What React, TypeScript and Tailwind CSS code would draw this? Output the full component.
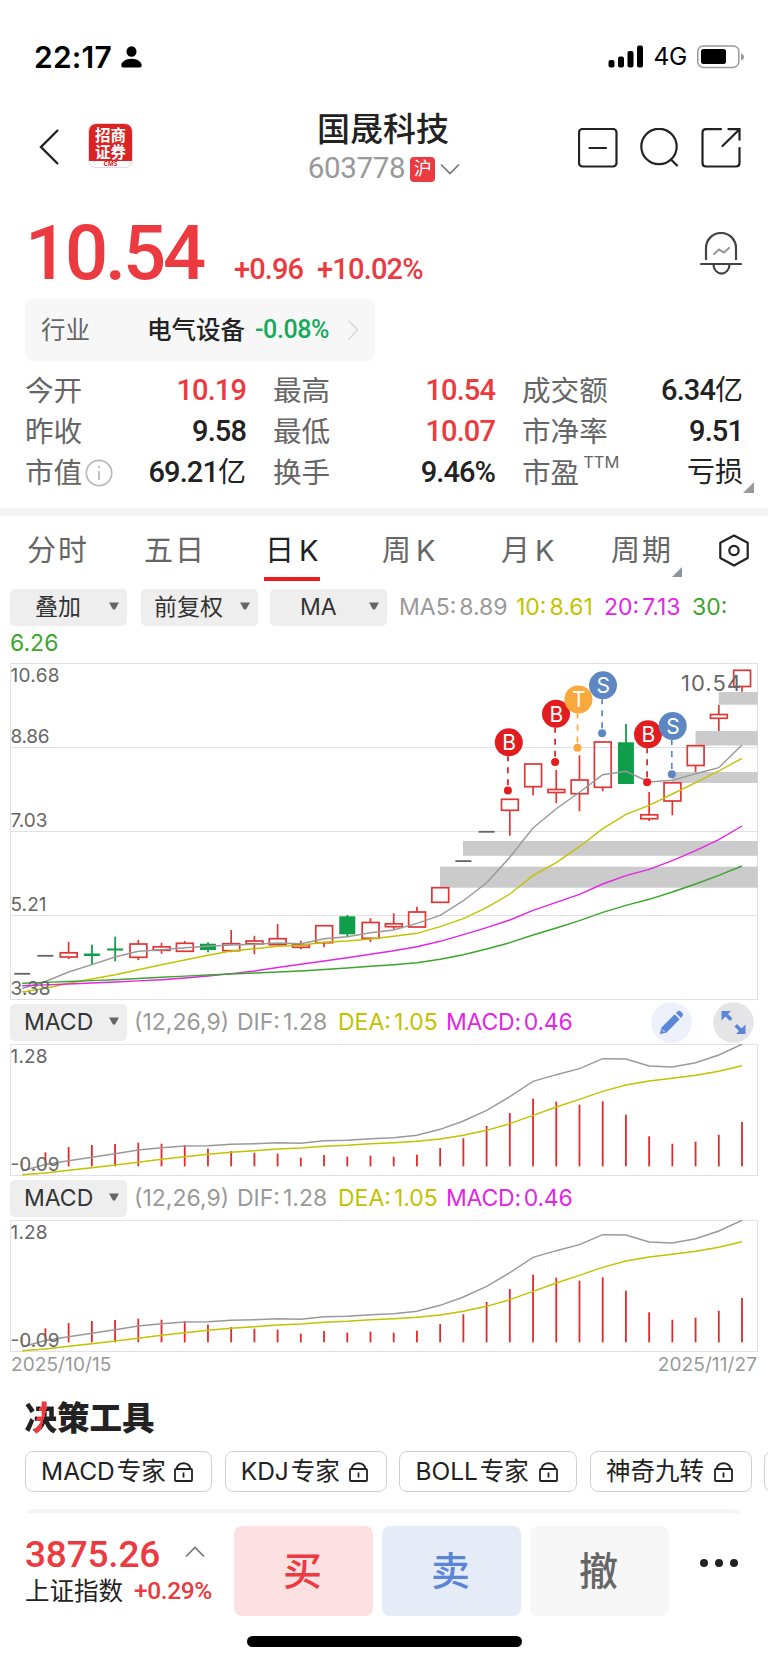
import React from 'react';

const UP = '#e03535';
const DOWN = '#0f9f4a';
const GRAY = '#999999';
const YELLOW = '#c3c200';
const MAGENTA = '#e326e6';
const GREEN = '#3ba52c';

const num = "font-['Roboto','Noto_Sans_CJK_SC',sans-serif] font-medium";

// x position of the n-th trading day
const dayX = (i: number) => 22.2 + i * 23.22;

type Candle = { type: 'up' | 'down' | 'flat'; top: number; bottom: number; high?: number; low?: number };

const candles: Candle[] = [
  { type: 'flat', top: 973.7, bottom: 973.7 },
  { type: 'flat', top: 955.7, bottom: 955.7 },
  { type: 'up', top: 952.8, bottom: 957, high: 941.7, low: 959 },
  { type: 'down', top: 953.5, bottom: 956, high: 944.7, low: 965 },
  { type: 'down', top: 948.5, bottom: 950.5, high: 936.7, low: 961.3 },
  { type: 'up', top: 944, bottom: 957.3, high: 940, low: 960 },
  { type: 'up', top: 946.8, bottom: 950.3, high: 942.7, low: 953.7 },
  { type: 'up', top: 943.3, bottom: 951.3, high: 941, low: 952 },
  { type: 'down', top: 943.7, bottom: 950, high: 942.3, low: 952.3 },
  { type: 'up', top: 943.7, bottom: 950.7, high: 930, low: 952.3 },
  { type: 'up', top: 941, bottom: 943.8, high: 935.7, low: 954.3 },
  { type: 'up', top: 938.7, bottom: 944.7, high: 924 },
  { type: 'up', top: 944.7, bottom: 947.3, high: 940.7, low: 949.3 },
  { type: 'up', top: 925.7, bottom: 942.7, low: 947.3 },
  { type: 'down', top: 916.3, bottom: 934.3, high: 915, low: 936.3 },
  { type: 'up', top: 922.5, bottom: 938.3, high: 918.3, low: 942 },
  { type: 'up', top: 923.8, bottom: 926.7, high: 913.3, low: 929.3 },
  { type: 'up', top: 912, bottom: 927, high: 906.7 },
  { type: 'up', top: 887.7, bottom: 902.3 },
  { type: 'flat', top: 861, bottom: 861 },
  { type: 'flat', top: 831.7, bottom: 831.7 },
  { type: 'up', top: 799.3, bottom: 810.3, low: 835.7 },
  { type: 'up', top: 764, bottom: 786.7, low: 795.3 },
  { type: 'up', top: 789.5, bottom: 792.5, high: 770, low: 803.3 },
  { type: 'up', top: 780, bottom: 793.7, high: 755.3, low: 811.3 },
  { type: 'up', top: 742, bottom: 787.3, low: 791.3 },
  { type: 'down', top: 742.3, bottom: 784, high: 724 },
  { type: 'up', top: 814.8, bottom: 818.7, high: 792, low: 821 },
  { type: 'up', top: 782.8, bottom: 801, low: 815.3 },
  { type: 'up', top: 745.7, bottom: 765.5, low: 772 },
  { type: 'up', top: 714.5, bottom: 718.3, high: 705, low: 731 },
  { type: 'up', top: 670.3, bottom: 686.5, low: 691.7 },
];

const ma5 = [
  988.5, 981.5, 972, 964.7, 957, 951.3, 949.7, 947.7, 946.3, 945, 944.3, 943, 943.7, 938.7, 936.7, 932.7,
  930, 923.3, 915.3, 900.7, 882.7, 857.3, 828, 808.7, 792.3, 774.7, 771.3, 782, 780.3, 773.7, 767.7, 745,
];
const ma10 = [
  992, 988.3, 983.3, 979, 974.7, 969.7, 964.7, 960, 955.3, 951, 948.7, 946.3, 945.3, 942.3, 941, 939,
  936.3, 933.3, 926.7, 918.7, 907.7, 894, 875.7, 862.7, 846.7, 828.7, 814.3, 805.3, 794, 782.7, 771, 758.3,
];
const ma20 = [
  985.7, 984.9, 984, 983, 982, 980.9, 979.7, 978, 976, 973.6, 971, 967.5, 964.3, 961, 957.7, 954.3,
  950.7, 946.7, 941.3, 934.7, 927.7, 920, 910.3, 902.3, 894.3, 884, 875.7, 869.3, 860.7, 850.7, 839.7, 826,
];
const ma30 = [
  983.3, 982.4, 981.5, 980.6, 979.7, 978.5, 977.3, 976.1, 975, 974, 973, 972, 971, 969.5, 968, 966.3,
  964.7, 962.7, 959.3, 954.7, 949, 942.7, 935, 928, 920.7, 912.3, 905.3, 899.3, 892, 884, 875.3, 866,
];
const dif = [
  1170.7, 1164.5, 1160.7, 1157.3, 1153.7, 1150, 1147.7, 1146, 1145.7, 1144.3, 1143.7, 1142.7, 1143.3, 1140.7, 1140.3, 1138.7,
  1137.7, 1135.3, 1129.3, 1121, 1110.3, 1096.7, 1081.3, 1074.7, 1068.7, 1058.7, 1059, 1066, 1067, 1062.7, 1055, 1044.3,
];
const dea = [
  1174.7, 1173, 1170.3, 1167.7, 1165, 1162.3, 1159.3, 1156.7, 1154.3, 1152.3, 1150.7, 1149, 1148, 1146.3, 1145.3, 1143.7,
  1142.7, 1141.3, 1139, 1135.3, 1130.3, 1123.7, 1115.3, 1107, 1099.3, 1091.3, 1085, 1081, 1078.3, 1075.3, 1071.3, 1065.7,
];
const bars = [
  1161, 1152.3, 1147, 1145, 1144, 1142.7, 1143.7, 1145, 1148.7, 1151, 1152.7, 1153.7, 1157.7, 1155, 1156.7, 1155.7,
  1156.7, 1154.7, 1148, 1138.3, 1126, 1113, 1098.7, 1101.7, 1104.7, 1101.3, 1114.7, 1136.3, 1143.7, 1141.7, 1134.7, 1122,
];

const gaps = [
  [440, 866.7, 887.7],
  [463, 841, 855.8],
  [672, 772, 783],
  [695.5, 731, 745.5],
  [718.7, 692, 704.7],
];

const marks = [
  { label: 'B', color: '#e21d20', x: 508.8, y: 742.3, dot: 790.5 },
  { label: 'B', color: '#e21d20', x: 556, y: 713.8, dot: 762 },
  { label: 'T', color: '#f9a93c', x: 578.4, y: 699.5, dot: 747.7 },
  { label: 'S', color: '#5d87c2', x: 603, y: 685.3, dot: 733.3 },
  { label: 'B', color: '#e21d20', x: 648, y: 734.3, dot: 782.3 },
  { label: 'S', color: '#5d87c2', x: 672.7, y: 726, dot: 774.3 },
];

const yLabels: [string, number, number][] = [
  ['10.68', 682.3, 49],
  ['8.86', 743.3, 39],
  ['7.03', 827.3, 37],
  ['5.21', 911.3, 36],
  ['3.38', 995, 40],
];

const Line = ({ data, color }: { data: number[]; color: string }) => (
  <polyline
    points={data.map((y, i) => `${dayX(i)},${y}`).join(' ')}
    fill="none"
    stroke={color}
    strokeWidth="1.4"
  />
);

const CandleShape = ({ candle, x }: { candle: Candle; x: number }) => {
  const { type, top, bottom, high = top, low = bottom } = candle;
  if (type === 'flat') {
    return <rect x={x - 8} y={top - 0.8} width="16" height="1.8" fill="#666" />;
  }
  if (type === 'down') {
    return (
      <g fill={DOWN}>
        <rect x={x - 0.8} y={high} width="1.8" height={low - high} />
        <rect x={x - 8} y={top} width="16" height={bottom - top} />
      </g>
    );
  }
  return (
    <g stroke={UP} strokeWidth="1.7" fill="none">
      <path d={`M${x} ${high}V${top}M${x} ${bottom}V${low}`} />
      <rect x={x - 8.3} y={top} width="16.8" height={bottom - top} />
    </g>
  );
};

const KChart = () => (
  <svg className="block w-full h-[337px]" viewBox="0 663 768 337">
    <rect x="10.5" y="663.5" width="747" height="336" fill="none" stroke="#e2e2e2" />
    {[747.5, 831.5, 915.5].map((y) => (
      <line key={y} x1="10.5" x2="757.5" y1={y} y2={y} stroke="#e2e2e2" />
    ))}
    {gaps.map(([x, y1, y2]) => (
      <rect key={x} x={x} y={y1} width={757.8 - x} height={y2 - y1} fill="#cbcbcb" />
    ))}
    {candles.map((candle, i) => (
      <CandleShape key={i} candle={candle} x={dayX(i)} />
    ))}
    <Line data={ma5} color={GRAY} />
    <Line data={ma10} color={YELLOW} />
    <Line data={ma20} color={MAGENTA} />
    <Line data={ma30} color={GREEN} />
    {yLabels.map(([label, y, w]) => (
      <text key={label} x="10.5" y={y} textLength={w} fontSize="19" fill="#666">
        {label}
      </text>
    ))}
    <text x="681" y="691" textLength="60" fontSize="22" fill="#666">
      10.54
    </text>
    {marks.map((m) => (
      <g key={m.x}>
        <line x1={m.x - 0.9} x2={m.x - 0.9} y1={m.y + 14} y2={m.dot} stroke={m.color} strokeWidth="1.7" strokeDasharray="6 6" strokeDashoffset="1" />
        <circle cx={m.x - 0.9} cy={m.dot} r="4" fill={m.color} />
        <circle cx={m.x} cy={m.y} r="14" fill={m.color} />
        <text x={m.x + 0.3} y={m.y + 7.8} textAnchor="middle" fontSize="21" fill="#fff">
          {m.label}
        </text>
      </g>
    ))}
  </svg>
);

const MacdChart = () => (
  <svg className="block w-full h-[132px]" viewBox="0 1044 768 132">
    <rect x="10.5" y="1044.5" width="747" height="131" fill="none" stroke="#e2e2e2" />
    {bars.map((y, i) => (
      <rect key={i} x={dayX(i) - 0.9} y={y} width="1.8" height={1166.3 - y} fill="#e22a2d" opacity={i === 0 ? 0.5 : 1} />
    ))}
    <Line data={dif} color={GRAY} />
    <Line data={dea} color={YELLOW} />
    <text x="10.5" y="1063" textLength="37" fontSize="19" fill="#666">1.28</text>
    <text x="10.5" y="1171.3" textLength="49" fontSize="19" fill="#666">-0.09</text>
  </svg>
);

const Select = ({ label, pad }: { label: string; pad: string }) => (
  <div className={`flex h-[37px] w-[117px] shrink-0 items-center justify-between rounded-[5px] bg-[#eeeeee] pr-[8px] ${pad}`}>
    <span className="whitespace-nowrap text-[23px] leading-none text-[#333]">{label}</span>
    <svg width="10" height="8" viewBox="0 0 10 8" className="mb-[3px] shrink-0">
      <path d="M0 .5h10L6 7.5H4z" fill="#666" />
    </svg>
  </div>
);

const MacdHeader = ({ tools }: { tools?: boolean }) => (
  <div className="flex h-[44px] items-center pl-[10px] pr-[14px]">
    <Select label="MACD" pad="pl-[14px]" />
    <div className="ml-[7px] flex text-[23px] leading-none whitespace-pre [word-spacing:-3.5px]">
      <span className="w-[103px] tracking-[0px] text-[#999]">(12,26,9)</span>
      <span className="w-[101px] tracking-[0px] text-[#999]">DIF: 1.28</span>
      <span className="w-[108px] tracking-[0px] text-[#c3c200]">DEA: 1.05</span>
      <span className="tracking-[-0.2px] text-[#e326e6]">MACD: 0.46</span>
    </div>
    {tools && (
      <div className="ml-auto flex gap-[21px]">
        <svg width="41" height="41" viewBox="0 0 41 41">
          <circle cx="20.5" cy="20.5" r="20.3" fill="#ecf1fb" />
          <path d="M10.5 25.5 23.7 12.3l5 5L15.5 30.5l-6.6 1.8z" fill="#5b86d8" />
          <path d="m25 11 1.7-1.7q1.4-1 2.8 0l2 2q1 1.4 0 2.8L30 16z" fill="#5b86d8" />
          <path d="m11 27.5 2.500 2.500" stroke="#ecf1fb" strokeWidth="1" />
        </svg>
        <svg width="41" height="41" viewBox="0 0 41 41">
          <circle cx="20.5" cy="20.5" r="20.3" fill="#e5e5e7" />
          <path d="M8.500 9h9.500l-3 3 4.500 4.500-2.500 2.500-4.500-4.500-4 4zM32.500 32H23l3-3-4.500-4.500L24 22l4.500 4.500 4-4z" fill="#5b86d8" />
        </svg>
      </div>
    )}
  </div>
);

const StatusBar = () => (
  <div className="flex h-[100px] items-start justify-between pl-[34px] pr-[23px] pt-[42px]">
    <div className="flex h-[29px] items-center">
      <span className="text-[30px] font-semibold leading-none tracking-[0.2px] text-black">22:17</span>
      <svg width="21" height="22" viewBox="0 0 21 22" className="ml-[9px]">
        <ellipse cx="10.5" cy="5.5" rx="5" ry="5.3" />
        <path d="M.3 19.5C.3 15.5 5 12.7 10.5 12.7s10.200 2.800 10.200 6.800c0 1.300-.8 1.900-2 1.900H2.300c-1.200 0-2-.6-2-1.900z" />
      </svg>
    </div>
    <div className="flex h-[29px] items-center">
      <svg width="36" height="23" viewBox="0 0 36 23">
        <rect x="0.5" y="15" width="6" height="7.5" rx="2" />
        <rect x="10" y="11.5" width="6" height="11" rx="2" />
        <rect x="19.5" y="6" width="6" height="16.5" rx="2" />
        <rect x="29" y="0.5" width="6" height="22" rx="2" />
      </svg>
      <span className="ml-[9px] text-[24.5px] leading-none tracking-[-0.3px] text-black">4G</span>
      <svg width="48" height="24" viewBox="0 0 48 24" className="ml-[10px]">
        <rect x="0.8" y="0.9" width="41" height="21.5" rx="5.5" fill="none" stroke="#999" strokeWidth="1.5" />
        <rect x="4" y="4" width="25" height="15" rx="2.5" />
        <path d="M44 8.5q3 1 3 3.500t-3 3.500z" fill="#999" />
      </svg>
    </div>
  </div>
);

const NavBar = () => (
  <div className="grid h-[95px] grid-cols-[1fr_auto_1fr] items-start px-[39px]">
    <div className="flex items-center gap-[29px] pt-[23px]">
      <svg width="20" height="36" viewBox="0 0 20 36" className="mt-[2px]">
        <path d="M19 1 2 18l17 17" fill="none" stroke="#222" strokeWidth="2.4" />
      </svg>
      <div className="flex h-[45px] w-[45px] flex-col items-center overflow-hidden rounded-[8px] border border-[#e8dada] bg-white font-['Noto_Sans_CJK_SC',sans-serif]">
        <div className="flex h-[37px] w-[45px] shrink-0 flex-col items-center bg-[#dc2222] pt-[2px] text-[15.5px] font-bold leading-[16.5px] text-white">
          <span>招商</span>
          <span>证券</span>
        </div>
        <span className="font-['Open_Sans',sans-serif] text-[6.5px] font-bold leading-[6px] text-[#dc2222]">CMS</span>
      </div>
    </div>
    <div className="flex flex-col items-center">
      <h1 className="-ml-[2px] pt-[12px] text-[33px] font-medium leading-[34px] text-[#222]">国晟科技</h1>
      <div className="mt-[7px] flex h-[32px] items-center">
        <span className="font-['Roboto',sans-serif] text-[29.5px] leading-none tracking-[-0.3px] text-[#999]">603778</span>
        <span className="ml-[5px] flex h-[25px] w-[25px] items-center justify-center rounded-[4px] bg-[#eb3a40] text-[18px] leading-none text-white">沪</span>
        <svg width="20" height="12" viewBox="0 0 20 12" className="ml-[5px]">
          <path d="m1 1.5 9 9 9-9" fill="none" stroke="#777" strokeWidth="1.7" />
        </svg>
      </div>
    </div>
    <div className="-mr-[12px] flex justify-end gap-[21.5px] pt-[28px]">
      <svg width="40" height="40" viewBox="0 0 40 40" fill="none" stroke="#222" strokeWidth="2.2" strokeLinecap="round">
        <rect x="1" y="1" width="37.5" height="37.5" rx="3.5" />
        <path d="M11.500 20h16.500" />
      </svg>
      <svg width="40" height="40" viewBox="0 0 40 40" fill="none" stroke="#222" strokeWidth="2.2" strokeLinecap="round">
        <circle cx="19" cy="18.500" r="17.700" />
        <path d="m31 31.500 6 6" />
      </svg>
      <svg width="40" height="40" viewBox="0 0 40 40" fill="none" stroke="#222" strokeWidth="2.2" strokeLinecap="round">
        <path d="M20 1.200H5Q1.500 1.200 1.500 5v30Q1.500 38.500 5 38.500h30q3.500 0 3.500-3.500V20M21.500 18 38 1.800M27.500 1.200h11v10.500" />
      </svg>
    </div>
  </div>
);

const stats = [
  { label: '今开', value: '10.19', red: true },
  { label: '最高', value: '10.54', red: true },
  { label: '成交额', value: '6.34', unit: '亿' },
  { label: '昨收', value: '9.58' },
  { label: '最低', value: '10.07', red: true },
  { label: '市净率', value: '9.51' },
  { label: '市值', value: '69.21', unit: '亿', info: true },
  { label: '换手', value: '9.46%' },
  { label: '市盈', value: '', unit: '亏损', sup: 'TTM' },
];

const Quote = () => (
  <div className="h-[313px] pl-[25px] pr-[25px]">
    <div className="flex h-[104px] items-start justify-between">
      <div className="flex items-baseline text-[#eb3a40]">
        <span className={`${num} w-[209px] text-[76px] leading-[116px] tracking-[-3.2px]`}>10.54</span>
        <span className={`${num} w-[83px] text-[29px] tracking-[-0.9px]`}>+0.96</span>
        <span className={`${num} text-[29px] tracking-[-0.8px]`}>+10.02%</span>
      </div>
      <svg width="42" height="43" viewBox="0 0 42 43" className="mr-px mt-[37px]" fill="none" stroke="#444" strokeWidth="2.2">
        <path d="M6 28V16a15 15 0 0 1 30 0v12" />
        <path d="M1 32h40" strokeLinecap="round" />
        <path d="M13.5 32.500a7.800 8.800 0 0 0 16 0" />
        <path d="m14 22 5-4.500 5 3 5-4.500" stroke="#999" strokeLinecap="round" />
      </svg>
    </div>
    <div className="flex h-[62px] w-[350px] items-center rounded-[8px] bg-[#f7f7f7] pl-[16px] text-[24.5px]">
      <span className="w-[106px] text-[#666]">行业</span>
      <span className="w-[108px] font-medium text-[#222]">电气设备</span>
      <span className={`${num} w-[92px] text-[25px] tracking-[-0.4px] text-[#12ab5b]`}>-0.08%</span>
      <svg width="12" height="22" viewBox="0 0 12 22">
        <path d="m1.5 1.500 9 9.500-9 9.500" fill="none" stroke="#dcdcdc" strokeWidth="1.8" />
      </svg>
    </div>
    <div className="grid grid-cols-[221px_222px_221px] gap-x-[27px] pt-[9px] text-[28.6px] leading-[41px]">
      {stats.map((s) => (
        <div key={s.label} className="flex h-[41px] items-center justify-between whitespace-nowrap">
          <span className="flex items-center text-[#666]">
            {s.label}
            {s.sup && <sup className="mb-[4px] ml-[4px] text-[16.5px] leading-none">{s.sup}</sup>}
            {s.info && (
              <svg width="28" height="28" viewBox="0 0 28 28" className="ml-[3px]" fill="none" stroke="#bbb" strokeWidth="1.8">
                <circle cx="14" cy="14" r="12.7" />
                <path d="M14 12v9M14 7v2.300" />
              </svg>
            )}
          </span>
          <span className={`${num} text-[29px] tracking-[-0.9px] ${s.red ? 'text-[#eb3a40]' : 'text-[#222]'}`}>
            {s.value}
            {s.unit && <span className="text-[28px] font-normal tracking-normal">{s.unit}</span>}
          </span>
        </div>
      ))}
    </div>
    <div className="flex justify-end">
      <svg width="11" height="11" viewBox="0 0 11 11" className="-mr-[11px] -mt-[11px]">
        <path d="M11 0v11H0z" fill="#999" />
      </svg>
    </div>
  </div>
);

const tabs = [
  { label: '分时', width: 'w-[117px]' },
  { label: '五日', width: 'w-[121px]' },
  { label: '日', suffix: 'K', width: 'w-[117px]', active: true },
  { label: '周', suffix: 'K', width: 'w-[119px]' },
  { label: '月', suffix: 'K', width: 'w-[110px]' },
  { label: '周期', width: 'w-[108px]', more: true },
];

const Tabs = () => (
  <div className="flex h-[71px] pl-[27px]">
    {tabs.map((tab, i) => (
      <div key={i} className={`${tab.width} pt-[14px]`}>
        <div className={`relative inline-block whitespace-nowrap text-[29px] leading-[42px] tracking-[2px] ${tab.active ? 'text-[#222]' : 'text-[#666]'}`}>
          {tab.label}
          {tab.suffix && <span className="ml-[3px]">{tab.suffix}</span>}
          {tab.active && <div className="absolute -left-px top-[47px] h-[4px] w-[56px] bg-[#ee1c1f]" />}
          {tab.more && (
            <svg width="10" height="10" viewBox="0 0 10 10" className="absolute -right-[9px] top-[37px]">
              <path d="M10 0v10H0z" fill="#8f959e" />
            </svg>
          )}
        </div>
      </div>
    ))}
    <svg width="30" height="33" viewBox="0 0 30 33" className="mt-[18px]" fill="none" stroke="#222" strokeWidth="2.2" strokeLinejoin="round">
      <path d="m15 1.500 13.700 7.300v15.200L15 31.500 1.300 24V8.800z" />
      <circle cx="15" cy="16.5" r="4.7" />
    </svg>
  </div>
);

const ChartLegend = () => (
  <div className="h-[76px] pl-[10px] pt-px">
    <div className="flex h-[39px] items-center">
      <Select label="叠加" pad="pl-[25px]" />
      <div className="ml-[14px]"><Select label="前复权" pad="pl-[13px]" /></div>
      <div className="ml-[12px]"><Select label="MA" pad="pl-[30px]" /></div>
      <div className="ml-[12px] flex whitespace-pre text-[23px] leading-none [word-spacing:-3.5px]">
        <span className="w-[117px] text-[#999]">MA5: 8.89</span>
        <span className="w-[88px] text-[#c3c200]">10: 8.61</span>
        <span className="w-[88px] text-[#e326e6]">20: 7.13</span>
        <span className="text-[#3ba52c]">30:</span>
      </div>
    </div>
    <div className="pt-[4px] text-[23px] leading-[24px] text-[#3ba52c]">6.26</div>
  </div>
);

const Lock = () => (
  <svg width="19" height="20" viewBox="0 0 19 20" fill="none" stroke="#222" strokeWidth="1.8" className="shrink-0">
    <rect x="1" y="7" width="17" height="12" rx="1" />
    <path d="M2.500 7C4-.7 15-.7 16.500 7M9.500 10.500v5" />
  </svg>
);

const experts = [
  { label: 'MACD 专家', width: 'w-[187px]' },
  { label: 'KDJ 专家', width: 'w-[162px]' },
  { label: 'BOLL 专家', width: 'w-[178px]' },
  { label: '神奇九转', width: 'w-[161.5px]' },
];

const DecisionTools = () => (
  <div className="h-[136px] overflow-hidden pl-[25px]">
    <h2 className="-ml-[0.5px] pt-[22px] text-[32.5px] font-black leading-[40px] text-[#222]">
      <span className="bg-[linear-gradient(105deg,#222_0_40%,#eb3a40_40%_57%,#222_57%)] bg-clip-text text-transparent">决</span>
      策工具
    </h2>
    <div className="mt-[12px] flex gap-[12.7px]">
      {experts.map((e) => (
        <div key={e.label} className={`${e.width} flex h-[41px] shrink-0 items-center justify-between whitespace-nowrap rounded-[8px] border border-[#d2d2d2] pl-[15px] pr-[18px] text-[24.5px] leading-none text-[#222]`}>
          <span className="[word-spacing:-5px]">{e.label}</span>
          <Lock />
        </div>
      ))}
      <div className="h-[41px] w-[100px] shrink-0 rounded-[8px] border border-[#d2d2d2]" />
    </div>
    <div className="mr-[26px] mt-[17px] h-[20px] rounded-[12px] bg-[#f4f4f4]" />
  </div>
);

const BottomBar = () => (
  <div className="flex h-[150px] flex-col">
    <div className="flex pl-[25px] pt-[13px]">
      <div className="w-[209px] pt-[7px]">
        <div className="flex h-[42px] items-center">
          <span className={`${num} w-[160px] text-[37px] leading-none tracking-[-0.2px] text-[#eb3a40]`}>3875.26</span>
          <svg width="20" height="12" viewBox="0 0 20 12" className="mb-[4px]">
            <path d="m1 10.500 9-9 9 9" fill="none" stroke="#777" strokeWidth="1.7" />
          </svg>
        </div>
        <div className="flex h-[32px] items-center pt-px text-[24.5px] leading-none text-[#222]">
          <span className="w-[109px]">上证指数</span>
          <span className={`${num} text-[24.5px] tracking-[-0.4px] text-[#eb3a40]`}>+0.29%</span>
        </div>
      </div>
      <div className="flex gap-[9px] text-[39px] font-medium">
        <button className="h-[90px] w-[139px] rounded-[8px] bg-[#fce0e2] pr-[2px] text-[#eb3a40]">买</button>
        <button className="h-[90px] w-[139px] rounded-[8px] bg-[#e5ecf8] pr-[2px] text-[#5b86d8]">卖</button>
        <button className="h-[90px] w-[139px] rounded-[8px] bg-[#f7f7f7] pr-[2px] text-[#666]">撤</button>
      </div>
      <div className="ml-[31px] flex gap-[7.5px] pt-[33px]">
        <span className="h-[7.5px] w-[7.5px] rounded-full bg-[#222]" />
        <span className="h-[7.5px] w-[7.5px] rounded-full bg-[#222]" />
        <span className="h-[7.5px] w-[7.5px] rounded-full bg-[#222]" />
      </div>
    </div>
    <div className="mx-auto mt-[20px] h-[10.5px] w-[275px] rounded-full bg-black" />
  </div>
);

export default function App() {
  return (
    <div className="flex h-[1663px] w-[768px] flex-col overflow-hidden bg-white font-['Inter','Noto_Sans_CJK_SC',sans-serif]">
      <StatusBar />
      <NavBar />
      <Quote />
      <div className="h-[8px] shrink-0 bg-[#f4f4f4]" />
      <Tabs />
      <ChartLegend />
      <KChart />
      <MacdHeader tools />
      <MacdChart />
      <MacdHeader />
      <MacdChart />
      <div className="flex h-[25px] items-center justify-between px-[11px] text-[19px] leading-none tracking-[0.1px] text-[#999]">
        <span>2025/10/15</span>
        <span>2025/11/27</span>
      </div>
      <DecisionTools />
      <BottomBar />
    </div>
  );
}
